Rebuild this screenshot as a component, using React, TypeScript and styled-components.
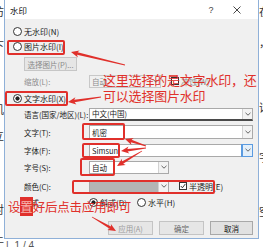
import React from 'react';
import styled, { createGlobalStyle } from 'styled-components';

const RED = '#e0302b';
const UI_FONT = '"Noto Sans CJK SC", "Noto Sans", sans-serif';

const GlobalStyle = createGlobalStyle`
  html, body {
    margin: 0;
    padding: 0;
    background: #fff;
  }
  body {
    font-family: ${UI_FONT};
  }
  * {
    box-sizing: border-box;
  }
`;

const Screen = styled.div`
  position: relative;
  width: 263px;
  height: 247px;
  overflow: hidden;
  background: #fff;
  display: grid;
  grid-template-columns: 4px 255px 4px;
  grid-template-rows: 239px 8px;
`;

/* document text peeking out behind the dialog */
const Gutter = styled.div<{ $side: 'left' | 'right' }>`
  grid-row: 1 / 3;
  grid-column: ${(p) => (p.$side === 'left' ? 1 : 3)};
  overflow: hidden;
  display: flex;
  flex-direction: column;
  align-items: ${(p) => (p.$side === 'left' ? 'flex-end' : 'flex-start')};
  font-size: 11px;
  line-height: 12px;
  color: #333;
`;

const Glyph = styled.span<{ $mt: number }>`
  margin-top: ${(p) => p.$mt}px;
  white-space: nowrap;
`;

const BottomStrip = styled.div`
  grid-row: 2;
  grid-column: 2 / 4;
  display: flex;
  gap: 6px;
  padding-left: 2px;
  font-size: 10px;
  line-height: 10px;
  margin-top: 2px;
  color: #555;
  font-family: "Liberation Sans", ${UI_FONT};
`;

const Dialog = styled.div`
  grid-row: 1;
  grid-column: 2;
  display: flex;
  flex-direction: column;
  border: 1px solid #8fb0d8;
  border-top: none;
  background: #f0f0f0;
`;

const TitleBar = styled.div`
  height: 19px;
  flex: none;
  background: #fff;
  display: flex;
  align-items: center;
  padding: 1px 8px 0 5px;
  font-size: 8.5px;
  color: #111;
`;

const Title = styled.span`
  flex: 1;
`;

const TitleButton = styled.span`
  width: 26px;
  display: flex;
  justify-content: center;
  color: #444;
  font-family: "Liberation Sans", sans-serif;
  font-size: 9px;
`;

const Body = styled.div`
  flex: 1;
  display: flex;
  flex-direction: column;
  padding: 5px 5px 0 4px;
  font-size: 7.5px;
  color: #1a1a1a;
`;

const Row = styled.div<{ $mt?: number; $indent?: number; $h?: number }>`
  height: ${(p) => p.$h ?? 14}px;
  margin-top: ${(p) => p.$mt ?? 0}px;
  padding-left: ${(p) => p.$indent ?? 0}px;
  display: flex;
  align-items: center;
  flex: none;
`;

const FieldRow = styled(Row)`
  display: grid;
  grid-template-columns: 65px 1fr;
  padding-left: 15px;
`;

const Label = styled.span<{ $muted?: boolean }>`
  color: ${(p) => (p.$muted ? '#8c8c8c' : '#1a1a1a')};
  white-space: nowrap;
`;

const Choice = styled.label<{ $muted?: boolean }>`
  display: inline-flex;
  align-items: center;
  gap: 2px;
  font-size: 8px;
  white-space: nowrap;
  color: ${(p) => (p.$muted ? '#8c8c8c' : '#1a1a1a')};
`;

const RadioDot = styled.span<{ $checked?: boolean }>`
  width: 9px;
  height: 9px;
  flex: none;
  border: 1px solid #333;
  border-radius: 50%;
  background: ${(p) =>
    p.$checked ? 'radial-gradient(circle, #222 0 1.8px, #fff 2.4px)' : '#fff'};
`;

const CheckBox = styled.span`
  width: 8px;
  height: 8px;
  flex: none;
  border: 1px solid #333;
  background: #fff;
  display: flex;
  align-items: center;
  justify-content: center;
`;

const GhostButton = styled.span`
  margin-left: 15px;
  width: 53px;
  height: 14px;
  display: flex;
  align-items: center;
  justify-content: center;
  border: 1px solid #c6c6c6;
  background: #e6e6e6;
  color: #8a8a8a;
  font-size: 7.5px;
`;

const ComboRow = styled.div`
  display: flex;
  align-items: center;
  gap: 10px;
`;

const Combo = styled.div<{
  $width?: number;
  $muted?: boolean;
  $fill?: string;
  $underline?: boolean;
  $h?: number;
}>`
  width: ${(p) => (p.$width ? `${p.$width}px` : '100%')};
  height: ${(p) => p.$h ?? 13}px;
  display: flex;
  align-items: stretch;
  border: 1px solid ${(p) => (p.$muted ? '#c8c8c8' : '#a9a9a9')};
  border-bottom: ${(p) => (p.$underline ? '2px solid #4a4a4a' : undefined)};
  background: ${(p) => p.$fill ?? (p.$muted ? '#f0f0f0' : '#fff')};
  color: ${(p) => (p.$muted ? '#8c8c8c' : '#1a1a1a')};
`;

const ComboText = styled.span`
  flex: 1;
  display: flex;
  align-items: center;
  padding-left: 2px;
  font-size: 7.5px;
  white-space: nowrap;
  overflow: hidden;
`;

const Chevron = styled.span<{ $focus?: boolean }>`
  width: 10px;
  flex: none;
  display: flex;
  align-items: center;
  justify-content: center;
  border-left: 1px solid ${(p) => (p.$focus ? '#5b9be0' : '#d2d2d2')};
  background: ${(p) => (p.$focus ? '#e3effa' : '#f3f3f3')};
  outline: ${(p) => (p.$focus ? '1px solid #5b9be0' : 'none')};
`;

const Footer = styled.div`
  margin-top: 12px;
  height: 14px;
  display: flex;
  justify-content: flex-end;
  gap: 6px;
  flex: none;
`;

const DlgButton = styled.span<{ $width: number; $tone: 'off' | 'soft' | 'on' }>`
  width: ${(p) => p.$width}px;
  height: 14px;
  display: flex;
  align-items: center;
  justify-content: center;
  font-size: 7.5px;
  border: 1px solid ${(p) => (p.$tone === 'on' ? '#a8a8a8' : '#c4c4c4')};
  background: ${(p) => (p.$tone === 'on' ? '#e1e1e1' : '#e6e6e6')};
  color: ${(p) => (p.$tone === 'off' ? '#9a9a9a' : p.$tone === 'soft' ? '#666' : '#111')};
`;

/* screenshot annotations drawn over the dialog */
const Overlay = styled.div`
  position: absolute;
  inset: 0;
  pointer-events: none;
`;

const RedBox = styled.div<{ $x: number; $y: number; $w: number; $h: number }>`
  position: absolute;
  left: ${(p) => p.$x}px;
  top: ${(p) => p.$y}px;
  width: ${(p) => p.$w}px;
  height: ${(p) => p.$h}px;
  border: 2px solid ${RED};
  border-radius: 2px;
`;

const Note = styled.div<{ $x: number; $y: number; $size: number }>`
  position: absolute;
  left: ${(p) => p.$x}px;
  top: ${(p) => p.$y}px;
  font-size: ${(p) => p.$size}px;
  line-height: 16px;
  color: ${RED};
  white-space: nowrap;
  letter-spacing: -0.2px;
`;

const Marked = styled.span`
  background: ${RED};
  color: #f6b5b0;
`;

const ArrowLayer = styled.svg`
  position: absolute;
  left: 0;
  top: 0;
`;

type Pt = [number, number];

const arrowPoints = (tail: Pt, tip: Pt) => {
  const dx = tip[0] - tail[0];
  const dy = tip[1] - tail[1];
  const len = Math.hypot(dx, dy);
  const ux = dx / len;
  const uy = dy / len;
  const nx = -uy;
  const ny = ux;
  const head = Math.min(8, len * 0.45);
  const bx = tip[0] - ux * head;
  const by = tip[1] - uy * head;
  const nb = bx + ux * 1.5;
  const mb = by + uy * 1.5;
  const pts: Pt[] = [
    [tail[0] + nx * 0.4, tail[1] + ny * 0.4],
    [nb + nx * 1.3, mb + ny * 1.3],
    [bx + nx * 3.6, by + ny * 3.6],
    tip,
    [bx - nx * 3.6, by - ny * 3.6],
    [nb - nx * 1.3, mb - ny * 1.3],
    [tail[0] - nx * 0.4, tail[1] - ny * 0.4],
  ];
  return pts.map((p) => `${p[0].toFixed(1)},${p[1].toFixed(1)}`).join(' ');
};

const arrows: [Pt, Pt][] = [
  [[125, 65], [71, 52]],
  [[101, 97], [68, 102]],
  [[146, 146], [125, 139]],
  [[146, 148], [121, 151]],
  [[142, 151], [117, 166]],
  [[92, 217], [116, 231]],
];

const leftGlyphs = [
  { ch: '访', mt: 5 },
  { ch: '下', mt: 22 },
  { ch: '机', mt: 52 },
  { ch: '立', mt: 14 },
  { ch: '对', mt: 62 },
  { ch: '上', mt: 17 },
];

const rightGlyphs = [
  { ch: '在', mt: 5 },
  { ch: '，', mt: 19 },
  { ch: '话', mt: 53 },
  { ch: '字', mt: 38 },
  { ch: '空', mt: 42 },
];

const ChevronIcon = () => (
  <svg width="6" height="4" viewBox="0 0 6 4">
    <path d="M0.5 0.8 L3 3.2 L5.5 0.8" fill="none" stroke="#555" strokeWidth="0.9" />
  </svg>
);

const App: React.FC = () => (
  <>
    <GlobalStyle />
    <Screen>
      <Gutter $side="left">
        {leftGlyphs.map((g, i) => (
          <Glyph key={i} $mt={g.mt}>
            {g.ch}
          </Glyph>
        ))}
      </Gutter>

      <Dialog>
        <TitleBar>
          <Title>水印</Title>
          <TitleButton>?</TitleButton>
          <TitleButton>
            <svg width="8" height="8" viewBox="0 0 8 8">
              <path d="M0.5 0.5 L7.5 7.5 M7.5 0.5 L0.5 7.5" stroke="#333" strokeWidth="0.9" />
            </svg>
          </TitleButton>
        </TitleBar>

        <Body>
          <Row $indent={4}>
            <Choice>
              <RadioDot />
              无水印(N)
            </Choice>
          </Row>
          <Row $mt={1} $indent={4}>
            <Choice>
              <RadioDot />
              图片水印(I)
            </Choice>
          </Row>
          <Row $mt={4}>
            <GhostButton>选择图片(P)...</GhostButton>
          </Row>
          <FieldRow $mt={3}>
            <Label $muted>缩放(L):</Label>
            <ComboRow>
              <Combo $width={72} $muted>
                <ComboText>自动</ComboText>
                <Chevron>
                  <ChevronIcon />
                </Chevron>
              </Combo>
              <Choice $muted>
                <CheckBox />
                冲蚀(W)
              </Choice>
            </ComboRow>
          </FieldRow>
          <Row $mt={3} $indent={4}>
            <Choice>
              <RadioDot $checked />
              文字水印(X)
            </Choice>
          </Row>
          <FieldRow $mt={2}>
            <Label>语言(国家/地区)(L):</Label>
            <Combo $underline>
              <ComboText>中文(中国)</ComboText>
              <Chevron>
                <ChevronIcon />
              </Chevron>
            </Combo>
          </FieldRow>
          <FieldRow $mt={4}>
            <Label>文字(T):</Label>
            <Combo $h={14}>
              <ComboText>机密</ComboText>
              <Chevron>
                <ChevronIcon />
              </Chevron>
            </Combo>
          </FieldRow>
          <FieldRow $mt={4}>
            <Label>字体(F):</Label>
            <Combo>
              <ComboText>Simsun</ComboText>
              <Chevron $focus>
                <ChevronIcon />
              </Chevron>
            </Combo>
          </FieldRow>
          <FieldRow $mt={3}>
            <Label>字号(S):</Label>
            <Combo $width={80}>
              <ComboText>自动</ComboText>
              <Chevron>
                <ChevronIcon />
              </Chevron>
            </Combo>
          </FieldRow>
          <FieldRow $mt={5}>
            <Label>颜色(C):</Label>
            <ComboRow>
              <Combo $width={80} $fill="#b4b4b4">
                <ComboText />
                <Chevron>
                  <ChevronIcon />
                </Chevron>
              </Combo>
              <Choice>
                <CheckBox>
                  <svg width="6" height="6" viewBox="0 0 6 6">
                    <path d="M0.8 3 L2.4 4.8 L5.4 0.9" fill="none" stroke="#222" strokeWidth="0.9" />
                  </svg>
                </CheckBox>
                半透明(E)
              </Choice>
            </ComboRow>
          </FieldRow>
          <FieldRow $mt={2}>
            <Label>版式:</Label>
            <ComboRow>
              <Choice>
                <RadioDot $checked />
                斜式(D)
              </Choice>
              <Choice>
                <RadioDot />
                水平(H)
              </Choice>
            </ComboRow>
          </FieldRow>

          <Footer>
            <DlgButton $width={45} $tone="off">
              应用(A)
            </DlgButton>
            <DlgButton $width={45} $tone="soft">
              确定
            </DlgButton>
            <DlgButton $width={43} $tone="on">
              取消
            </DlgButton>
          </Footer>
        </Body>
      </Dialog>

      <Gutter $side="right">
        {rightGlyphs.map((g, i) => (
          <Glyph key={i} $mt={g.mt}>
            {g.ch}
          </Glyph>
        ))}
      </Gutter>

      <BottomStrip>
        <span>|</span>
        <span>1 / 4</span>
      </BottomStrip>

      <Overlay>
        <RedBox $x={7} $y={40} $w={58} $h={15} />
        <RedBox $x={5} $y={91} $w={63} $h={15} />
        <RedBox $x={82} $y={123} $w={43} $h={17} />
        <RedBox $x={82} $y={143} $w={38} $h={15} />
        <RedBox $x={80} $y={158} $w={35} $h={18} />
        <RedBox $x={72} $y={180} $w={143} $h={14} />

        <Note $x={103} $y={72} $size={13}>
          这里选择的是文字水印，还
          <br />
          可以选择图片水印
        </Note>
        <Note $x={8} $y={199} $size={12.5}>
          设<Marked>置</Marked>好后点击应用即可
        </Note>

        <ArrowLayer width={263} height={247} viewBox="0 0 263 247">
          {arrows.map(([tail, tip], i) => (
            <polygon key={i} points={arrowPoints(tail, tip)} fill={RED} />
          ))}
        </ArrowLayer>
      </Overlay>
    </Screen>
  </>
);

export default App;
